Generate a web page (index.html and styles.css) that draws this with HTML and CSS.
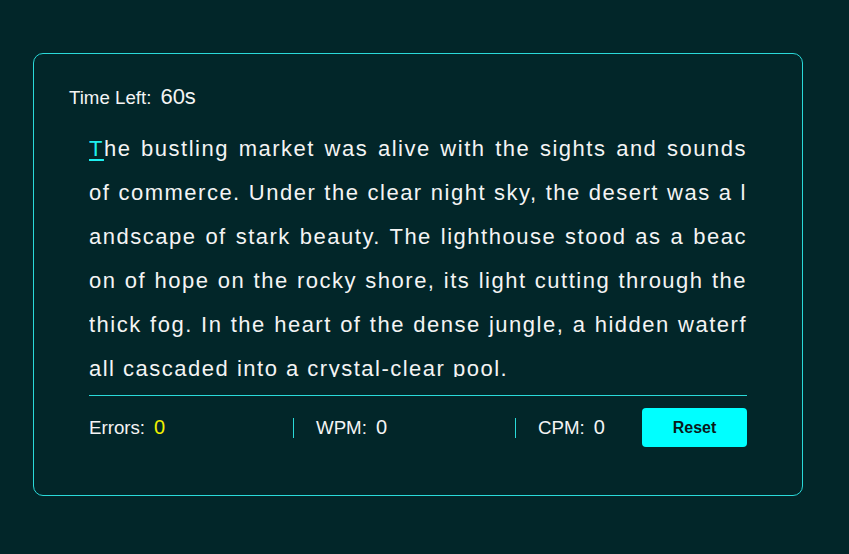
FILE: index.html
```html
<!DOCTYPE html>
<html>
<head>
<meta charset="utf-8">
<link rel="stylesheet" href="styles.css">
</head>
<body>
<div class="card">
  <div class="timer"><span class="label">Time Left:</span><span class="time">60s</span></div>
  <div class="text"><span class="cur">T</span>he bustling market was alive with the sights and sounds of commerce. Under the clear night sky, the desert was a landscape of stark beauty. The lighthouse stood as a beacon of hope on the rocky shore, its light cutting through the thick fog. In the heart of the dense jungle, a hidden waterfall cascaded into a crystal-clear pool.</div>
  <div class="stats">
    <div class="stat first"><span class="slabel">Errors:</span><span class="sval err">0</span></div>
    <div class="stat sep wpm"><span class="slabel">WPM:</span><span class="sval">0</span></div>
    <div class="stat sep"><span class="slabel">CPM:</span><span class="sval">0</span></div>
    <button class="reset">Reset</button>
  </div>
</div>
</body>
</html>
```
FILE: styles.css
```css
html, body { margin: 0; padding: 0; }
body {
  background: #022629;
  font-family: "Liberation Sans", Arial, sans-serif;
  color: #f4f4f4;
  width: 849px;
  height: 554px;
  overflow: hidden;
}
.card {
  box-sizing: border-box;
  width: 770px;
  height: 443px;
  margin: 53px 0 0 33px;
  border: 1px solid #2ad9d9;
  border-radius: 10px;
  padding: 31px 35px 0 35px;
}
.timer {
  display: flex;
  align-items: baseline;
  height: 24px;
  line-height: 24px;
}
.label { font-size: 18.7px; margin-right: 9px; }
.time { font-size: 22px; }
.text {
  margin: 18px 20px 0 20px;
  height: 250px;
  overflow: hidden;
  font-size: 22px;
  line-height: 44px;
  letter-spacing: 1.5px;
  word-break: break-all;
  text-align: justify;
}
.cur {
  color: #1ff0f0;
  text-decoration: underline;
  text-underline-offset: 3px;
}
.stats {
  margin: 18px 20px 0 20px;
  border-top: 1px solid #2ad9d9;
  padding-top: 12px;
  display: flex;
  align-items: center;
}
.stat {
  display: flex;
  align-items: center;
  height: 20px;
}
.first { width: 204px; }
.wpm { width: 199px; }
.sep { border-left: 1px solid #2ad9d9; padding-left: 22px; }
.slabel { font-size: 18.7px; margin-right: 9px; }
.sval { font-size: 20px; }
.err { color: #f0f000; }
.reset {
  margin-left: auto;
  width: 105px;
  height: 39px;
  border: none;
  border-radius: 4px;
  background: #00ffff;
  color: #0a1a1a;
  font-family: "Liberation Sans", Arial, sans-serif;
  font-size: 16px;
  font-weight: bold;
}
```
